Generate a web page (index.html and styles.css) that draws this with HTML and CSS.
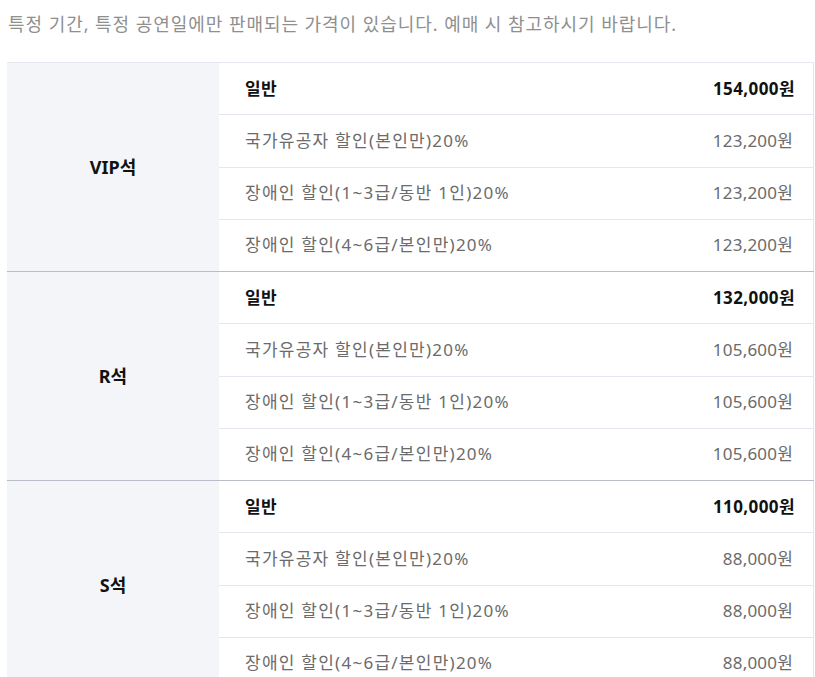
FILE: index.html
```html
<!DOCTYPE html>
<html lang="ko">
<head>
<meta charset="utf-8">
<link rel="stylesheet" href="styles.css">
</head>
<body>
<p class="notice">특정 기간, 특정 공연일에만 판매되는 가격이 있습니다. 예매 시 참고하시기 바랍니다.</p>
<table class="price">
  <tbody class="group">
    <tr><th rowspan="4" class="seat">VIP석</th><td class="name main">일반</td><td class="amt main">154,000원</td></tr>
    <tr><td class="name">국가유공자 할인(본인만)20%</td><td class="amt">123,200원</td></tr>
    <tr><td class="name">장애인 할인(1~3급/동반 1인)20%</td><td class="amt">123,200원</td></tr>
    <tr class="last"><td class="name">장애인 할인(4~6급/본인만)20%</td><td class="amt">123,200원</td></tr>
  </tbody>
  <tbody class="group">
    <tr><th rowspan="4" class="seat">R석</th><td class="name main">일반</td><td class="amt main">132,000원</td></tr>
    <tr><td class="name">국가유공자 할인(본인만)20%</td><td class="amt">105,600원</td></tr>
    <tr><td class="name">장애인 할인(1~3급/동반 1인)20%</td><td class="amt">105,600원</td></tr>
    <tr class="last"><td class="name">장애인 할인(4~6급/본인만)20%</td><td class="amt">105,600원</td></tr>
  </tbody>
  <tbody class="group">
    <tr><th rowspan="4" class="seat">S석</th><td class="name main">일반</td><td class="amt main">110,000원</td></tr>
    <tr><td class="name">국가유공자 할인(본인만)20%</td><td class="amt">88,000원</td></tr>
    <tr><td class="name">장애인 할인(1~3급/동반 1인)20%</td><td class="amt">88,000원</td></tr>
    <tr class="last"><td class="name">장애인 할인(4~6급/본인만)20%</td><td class="amt">88,000원</td></tr>
  </tbody>
</table>
</body>
</html>
```
FILE: styles.css
```css
html, body {
  margin: 0;
  padding: 0;
  background: #fff;
}
body {
  font-family: "Noto Sans", "Noto Sans CJK KR", sans-serif;
  padding: 0 1px 0 7px;
}
.notice {
  margin: 0;
  padding: 10px 0 0 1px;
  height: 52px;
  box-sizing: border-box;
  font-size: 18px;
  line-height: 28px;
  letter-spacing: 0.95px;
  color: #8f8f8f;
  white-space: nowrap;
}
.price {
  width: 807px;
  border-collapse: collapse;
  margin-top: 10px;
  border-top: 1px solid #e4e7ee;
  border-right: 1px solid #e4e7ee;
}
.seat {
  width: 212px;
  background: #f4f5f9;
  font-size: 18px;
  font-weight: 700;
  color: #111;
  text-align: center;
  vertical-align: middle;
  padding: 0 0 2px;
  border-bottom: 1px solid #b9bdc8;
}
.price td {
  height: 48.25px;
  padding: 0 0 3px;
  font-size: 17px;
  color: #6b6b6b;
  border-bottom: 1px solid #e3e6ec;
  vertical-align: middle;
}
.price tr.last td {
  border-bottom: 1px solid #b9bdc8;
}
.name {
  padding-left: 26px !important;
  letter-spacing: 1.25px;
}
.amt {
  text-align: right;
  padding-right: 20px !important;
  letter-spacing: 0.2px;
}
.amt.main {
  padding-right: 18px !important;
  letter-spacing: 0.4px;
}
.main {
  font-weight: 700;
  color: #111 !important;
}
.name.main {
  letter-spacing: 0.3px;
}
```
